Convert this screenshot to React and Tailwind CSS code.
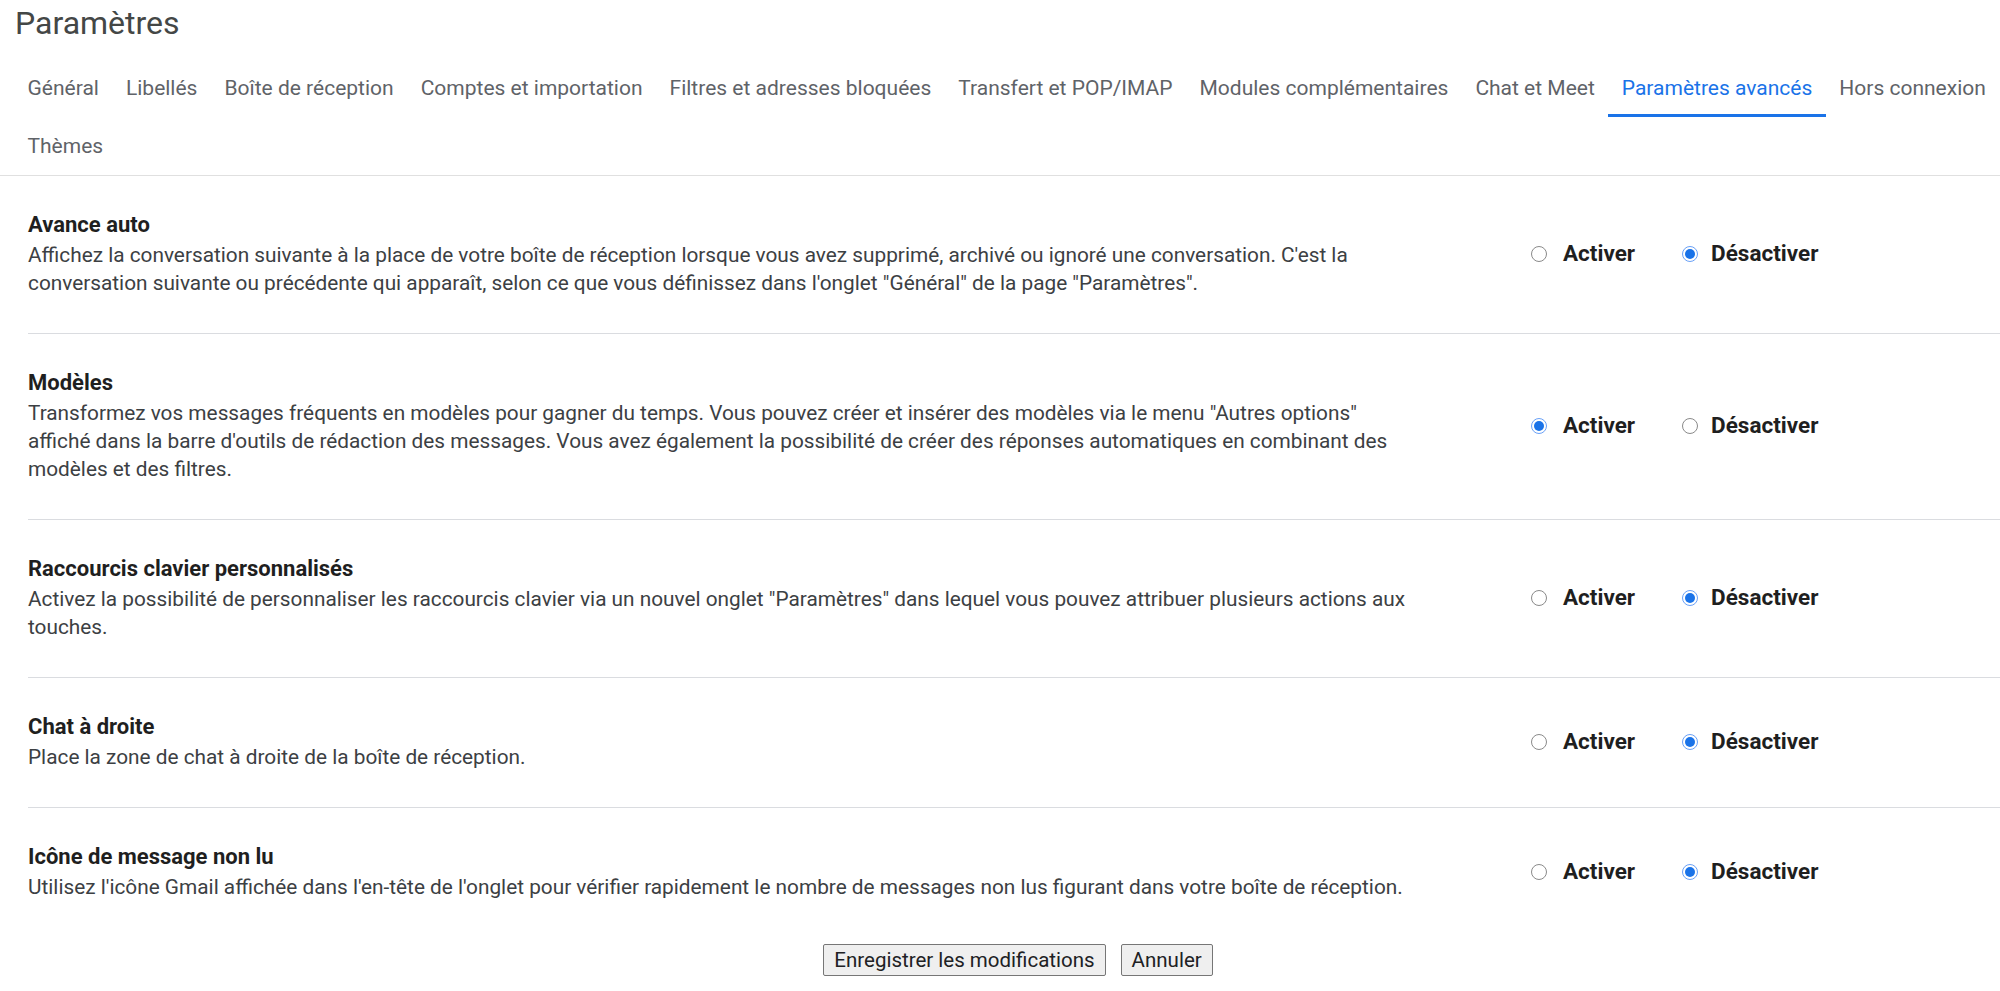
import React from 'react'

const tabs = [
  'Général',
  'Libellés',
  'Boîte de réception',
  'Comptes et importation',
  'Filtres et adresses bloquées',
  'Transfert et POP/IMAP',
  'Modules complémentaires',
  'Chat et Meet',
  'Paramètres avancés',
  'Hors connexion'
]

const settings = [
  {
    title: 'Avance auto',
    lines: [
      "Affichez la conversation suivante à la place de votre boîte de réception lorsque vous avez supprimé, archivé ou ignoré une conversation. C'est la",
      'conversation suivante ou précédente qui apparaît, selon ce que vous définissez dans l\'onglet "Général" de la page "Paramètres".'
    ],
    enabled: false
  },
  {
    title: 'Modèles',
    lines: [
      'Transformez vos messages fréquents en modèles pour gagner du temps. Vous pouvez créer et insérer des modèles via le menu "Autres options"',
      "affiché dans la barre d'outils de rédaction des messages. Vous avez également la possibilité de créer des réponses automatiques en combinant des",
      'modèles et des filtres.'
    ],
    enabled: true
  },
  {
    title: 'Raccourcis clavier personnalisés',
    lines: [
      'Activez la possibilité de personnaliser les raccourcis clavier via un nouvel onglet "Paramètres" dans lequel vous pouvez attribuer plusieurs actions aux',
      'touches.'
    ],
    enabled: false
  },
  {
    title: 'Chat à droite',
    lines: ['Place la zone de chat à droite de la boîte de réception.'],
    enabled: false
  },
  {
    title: 'Icône de message non lu',
    lines: [
      "Utilisez l'icône Gmail affichée dans l'en-tête de l'onglet pour vérifier rapidement le nombre de messages non lus figurant dans votre boîte de réception."
    ],
    enabled: false
  }
]

function Tab({ label, active }) {
  return (
    <div
      className={
        active
          ? 'h-[58px] pt-[4px] px-[13.5px] flex items-center border-b-[3px] border-[#1a73e8] text-[#1a73e8]'
          : 'h-[58px] pt-[4px] px-[13.5px] flex items-center border-b-[3px] border-transparent text-[#5f6368]'
      }
    >
      {label}
    </div>
  )
}

function Radio({ checked }) {
  if (checked) {
    return (
      <span className="w-[16px] h-[16px] rounded-full border-[1.5px] border-[#6aa1f7] flex items-center justify-center">
        <span className="w-[10px] h-[10px] rounded-full bg-[#1a73e8]" />
      </span>
    )
  }
  return <span className="w-[16px] h-[16px] rounded-full border-[1.5px] border-[#8a8a8a] bg-white" />
}

function SettingRow({ setting, last }) {
  return (
    <div className={last ? 'flex items-center pt-[35px] pb-[36px]' : 'flex items-center pt-[35px] pb-[36px] border-b border-[#dadce0]'}>
      <div className="w-[1503px] shrink-0">
        <div className="text-[22px] leading-[28px] font-bold text-[#1f1f1f]">{setting.title}</div>
        <div className="mt-[2px] text-[20.8px] leading-[28px] text-[#3c4043] whitespace-nowrap">
          {setting.lines.map((line, i) => (
            <div key={i}>{line}</div>
          ))}
        </div>
      </div>
      <div className="flex items-center text-[22.5px] font-bold text-[#1f1f1f]">
        <label className="flex items-center">
          <Radio checked={setting.enabled} />
          <span className="ml-[16px]">Activer</span>
        </label>
        <label className="flex items-center ml-[47px]">
          <Radio checked={!setting.enabled} />
          <span className="ml-[13px]">Désactiver</span>
        </label>
      </div>
    </div>
  )
}

export default function App() {
  return (
    <div className="min-h-screen bg-white font-['Roboto','Liberation_Sans',sans-serif]">
      {/* titre */}
      <h1 className="px-[15px] pt-[4px] text-[32px] leading-[38px] text-[#444746]">Paramètres</h1>

      {/* onglets */}
      <div className="mt-[17px] border-b border-[#e0e0e0] text-[21px] whitespace-nowrap">
        <div className="flex px-[14px]">
          {tabs.map(t => (
            <Tab key={t} label={t} active={t === 'Paramètres avancés'} />
          ))}
        </div>
        <div className="flex px-[14px]">
          <Tab label="Thèmes" />
        </div>
      </div>

      {/* paramètres */}
      <div className="ml-[28px]">
        {settings.map((s, i) => (
          <SettingRow key={s.title} setting={s} last={i === settings.length - 1} />
        ))}
      </div>

      {/* boutons */}
      <div className="mt-[7px] flex justify-center gap-[15px] pl-[36px] text-[20.5px] text-[#202124]">
        <button className="h-[32px] px-[10px] border border-[#767676] rounded-[2px] bg-[#efefef]">
          Enregistrer les modifications
        </button>
        <button className="h-[32px] px-[10px] border border-[#767676] rounded-[2px] bg-[#efefef]">
          Annuler
        </button>
      </div>
    </div>
  )
}
